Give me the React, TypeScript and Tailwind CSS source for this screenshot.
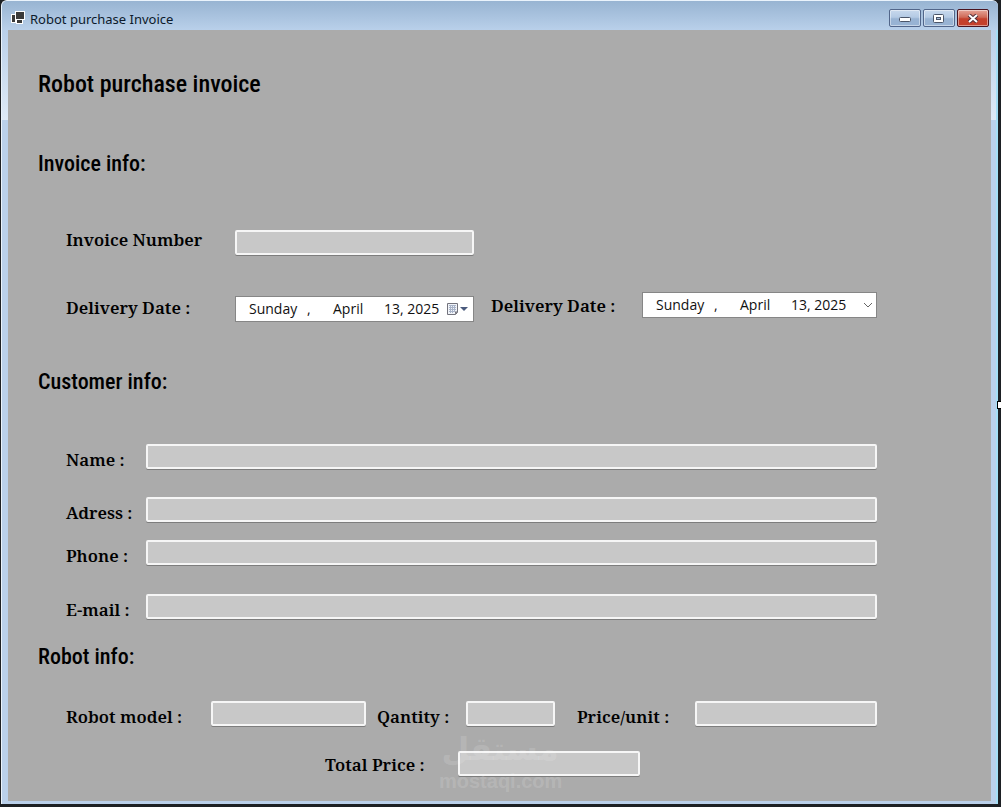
import { useState } from "react"
import type { InputHTMLAttributes, ReactNode } from "react"

const headingClass = "font-['Roboto_Condensed','Liberation_Sans_Narrow','Roboto',sans-serif] font-medium text-black"
const labelClass =
  "shrink-0 whitespace-nowrap font-['Noto_Serif','DejaVu_Serif_Condensed','DejaVu_Serif',serif] text-[17px] leading-5 font-semibold text-black"

function Label({ htmlFor, className = "", children }: { htmlFor: string; className?: string; children: ReactNode }) {
  return (
    <label htmlFor={htmlFor} className={`${labelClass} ${className}`}>
      {children}
    </label>
  )
}

function TextBox({ className = "", ...props }: InputHTMLAttributes<HTMLInputElement>) {
  return (
    <input
      type="text"
      className={`h-[25px] min-w-0 rounded-xs border-2 border-[#f6f6f6] bg-[#c8c8c8] px-1 font-['Open_Sans',sans-serif] text-sm text-black shadow-[0_1px_0_#7d7d7d] outline-none ${className}`}
      {...props}
    />
  )
}

function DatePicker({ id, className = "", children }: { id: string; className?: string; children: ReactNode }) {
  return (
    <button
      id={id}
      type="button"
      aria-haspopup="dialog"
      className={`flex h-[26px] items-center border border-[#868686] bg-white pl-[13px] font-['Open_Sans',sans-serif] text-sm text-[#111] ${className}`}
    >
      <span className="w-[58px] text-left">Sunday</span>
      <span className="w-[26px] text-left">,</span>
      <span className="w-[51px] text-left">April</span>
      <span className="whitespace-nowrap">13, 2025</span>
      {children}
    </button>
  )
}

function AppIcon() {
  return (
    <svg width="14" height="14" viewBox="0 0 14 14" aria-hidden="true" shapeRendering="crispEdges">
      <rect x="0" y="3" width="6" height="9" fill="#fff" />
      <rect x="4" y="0" width="10" height="9" fill="#fff" />
      <rect x="5" y="8" width="7" height="5" fill="#fff" />
      <rect x="1" y="4" width="3" height="7" fill="#3a3a3a" />
      <rect x="5" y="1" width="8" height="7" fill="#3a3a3a" />
      <rect x="6" y="9" width="5" height="3" fill="#3a3a3a" />
    </svg>
  )
}

function CalendarIcon() {
  return (
    <svg className="mr-[5px] ml-auto" width="21" height="14" viewBox="0 0 21 14" aria-hidden="true">
      <path d="M0.5 1.5h10v9l-2 2h-8z" fill="#f1f4f9" stroke="#73737c" />
      <path d="M2 3.500h7M2 5.500h7M2 7.500h7M2 9.500h6M3.500 3v8M5.500 3v8M7.500 3v7" stroke="#a9b4c9" />
      <path d="M8 12.500v-3h3z" fill="#73737c" />
      <path d="M13 5h8l-4 4z" fill="#4a5a7d" />
    </svg>
  )
}

function CaptionButton({ label, danger, children }: { label: string; danger?: boolean; children: ReactNode }) {
  const tone = danger
    ? "border-[#4a1420] bg-linear-to-b from-[#e5a498] from-0% via-[#cf6a58] via-45% to-[#c4402c] to-55%"
    : "border-[#52668a] bg-linear-to-b from-[#c8d9ed] from-0% via-[#b4cae4] via-45% to-[#98b3d3] to-55%"
  return (
    <button
      type="button"
      aria-label={label}
      className={`flex h-[18px] w-8 items-center justify-center rounded-xs border shadow-[inset_0_0_0_1px_rgba(255,255,255,0.45)] ${tone}`}
    >
      {children}
    </button>
  )
}

function TitleBar() {
  return (
    <header className="flex h-[29px] items-start bg-linear-to-b from-[#98b4d2] to-[#b9d0ea] pr-[9px] pl-[9px]">
      <div className="mt-[10px]">
        <AppIcon />
      </div>
      <span className="mt-2 ml-[5px] font-['Noto_Sans',sans-serif] text-[13px] leading-5 text-[#0c1a2c]">
        Robot purchase Invoice
      </span>
      <div className="mt-2 ml-auto flex gap-0.5">
        <CaptionButton label="Minimize">
          <svg className="mt-0.5" width="12" height="6" viewBox="0 0 12 6" aria-hidden="true">
            <rect x="0.5" y="1.500" width="11" height="4" rx="1" fill="#fff" stroke="#4b5568" />
          </svg>
        </CaptionButton>
        <CaptionButton label="Maximize">
          <svg width="12" height="9" viewBox="0 0 12 9" aria-hidden="true">
            <rect x="0.5" y="0.5" width="10" height="8" rx="1" fill="#fff" stroke="#4b5568" />
            <rect x="3.500" y="3.500" width="4" height="2" fill="#a9c0dc" stroke="#4b5568" />
          </svg>
        </CaptionButton>
        <CaptionButton label="Close" danger>
          <svg width="12" height="9" viewBox="0 0 12 9" aria-hidden="true">
            <path d="M2 1l8 7M10 1l-8 7" stroke="#54303a" strokeWidth="4" />
            <path d="M2 1l8 7M10 1l-8 7" stroke="#fff" strokeWidth="2" />
          </svg>
        </CaptionButton>
      </div>
    </header>
  )
}

function Watermark() {
  return (
    <div className="pointer-events-none absolute -top-[22px] left-[431px] w-[122px] text-center text-white/15">
      <div dir="rtl" lang="ar" className="font-['DejaVu_Sans',sans-serif] text-[32px] leading-10 font-bold">
        مستقل
      </div>
      <div className="font-['Liberation_Sans',sans-serif] text-xl leading-6 font-bold">mostaqi.com</div>
    </div>
  )
}

const customerFields = [
  { id: "name", label: "Name :", gap: "mb-7" },
  { id: "address", label: "Adress :", gap: "mb-[18px]" },
  { id: "phone", label: "Phone :", gap: "mb-[29px]" },
  { id: "email", label: "E-mail :", gap: "" },
]

export default function App() {
  const [customer, setCustomer] = useState<Record<string, string>>({})

  return (
    <div className="relative flex min-h-screen flex-col border-r-3 border-b-3 border-l border-[#1d2024] bg-[#1d2024]">
      <div className="flex grow flex-col overflow-hidden rounded-t-md border-t border-l border-[#eaf3fc] bg-[#bad0ea]">
        <TitleBar />

        <div className="flex grow border-r-2 border-[#a4def5] bg-linear-to-b from-[#bad0ea] from-0% via-[#dfeaf6] via-[90px] to-[#bad0ea] to-[90px] pb-[3px] pl-1.5">
          <form className="min-w-0 grow bg-[#ababab] pt-[38px] pr-[114px] pl-[30px]" onSubmit={(e) => e.preventDefault()}>
            <h1 className={`${headingClass} text-2xl leading-8`}>Robot purchase invoice</h1>

            <section className="mt-[50px]">
              <h2 className={`${headingClass} text-[22px] leading-7`}>Invoice info:</h2>
              <div className="mt-[52px] flex items-start pl-7">
                <Label htmlFor="invoice-number" className="w-[169px]">
                  Invoice Number
                </Label>
                <TextBox id="invoice-number" className="w-[239px]" />
              </div>
              <div className="mt-[37px] flex items-start pl-7">
                <Label htmlFor="delivery-date" className="mt-1.5 w-[169px]">
                  Delivery Date :
                </Label>
                <DatePicker id="delivery-date" className="mt-1 w-[239px]">
                  <CalendarIcon />
                </DatePicker>
                <Label htmlFor="delivery-date-2" className="mt-1 ml-[17px] w-[151px]">
                  Delivery Date :
                </Label>
                <DatePicker id="delivery-date-2" className="flex-1">
                  <svg className="mr-[3px] ml-auto" width="10" height="6" viewBox="0 0 10 6" aria-hidden="true">
                    <path d="M1 1l4 4 4-4" fill="none" stroke="#666" />
                  </svg>
                </DatePicker>
              </div>
            </section>

            <section className="mt-[46px]">
              <h2 className={`${headingClass} text-[22px] leading-7`}>Customer info:</h2>
              <div className="mt-12 pl-7">
                {customerFields.map((field) => (
                  <div key={field.id} className={`flex h-[25px] items-start ${field.gap}`}>
                    <Label htmlFor={field.id} className="mt-1.5 w-20">
                      {field.label}
                    </Label>
                    <TextBox
                      id={field.id}
                      className="flex-1"
                      value={customer[field.id] ?? ""}
                      onChange={(e) => setCustomer({ ...customer, [field.id]: e.target.value })}
                    />
                  </div>
                ))}
              </div>
            </section>

            <section className="mt-6">
              <h2 className={`${headingClass} text-[22px] leading-7`}>Robot info:</h2>
              <div className="mt-[30px] flex h-[25px] items-start pl-7">
                <Label htmlFor="model" className="mt-1.5 w-[145px]">
                  Robot model :
                </Label>
                <TextBox id="model" className="w-[155px]" />
                <Label htmlFor="quantity" className="mt-1.5 ml-[11px] w-[89px]">
                  Qantity :
                </Label>
                <TextBox id="quantity" className="w-[89px]" />
                <Label htmlFor="unit-price" className="mt-1.5 ml-[22px] w-[118px]">
                  Price/unit :
                </Label>
                <TextBox id="unit-price" className="flex-1" />
              </div>
              <div className="relative mt-[25px] -ml-[30px] flex items-start pl-[317px]">
                <Label htmlFor="total" className="mt-1 w-[133px]">
                  Total Price :
                </Label>
                <TextBox id="total" className="w-[182px]" />
                <Watermark />
              </div>
            </section>
          </form>
          <div className="w-[5px] shrink-0" />
        </div>
      </div>
      {/* resize grip on the right edge */}
      <div className="absolute top-1/2 -right-[3px] h-1.5 w-[3px] bg-white outline outline-black" />
    </div>
  )
}
